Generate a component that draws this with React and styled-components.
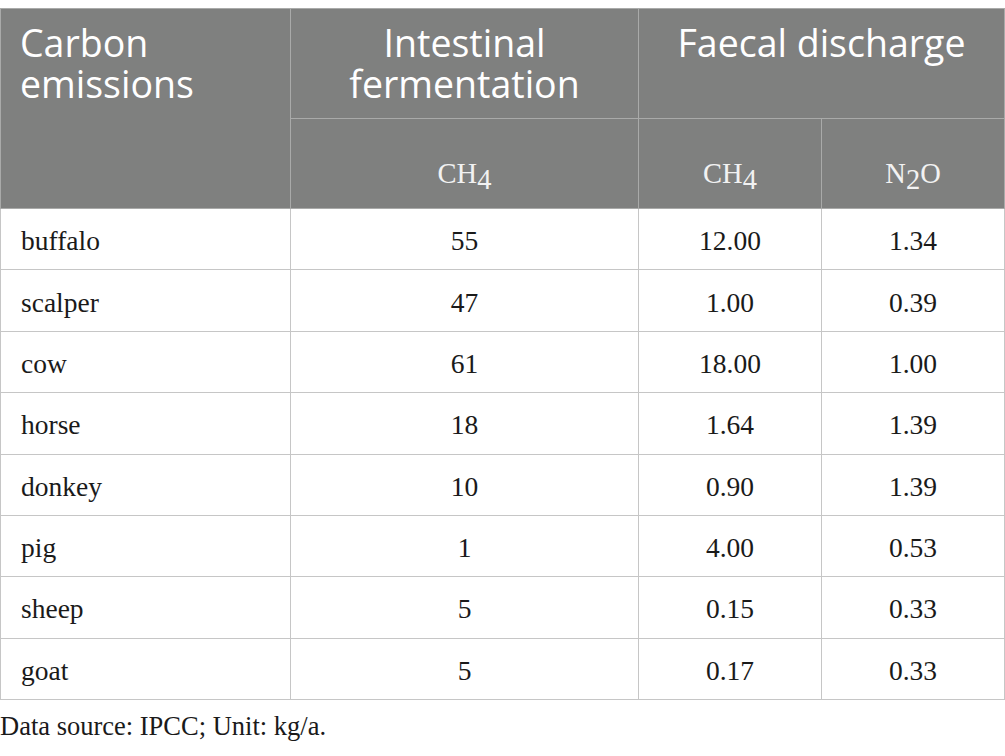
import React from "react";
import styled, { createGlobalStyle } from "styled-components";

const Global = createGlobalStyle`
  html, body { margin: 0; padding: 0; background: #ffffff; }
  body { font-family: "Liberation Serif", "Times New Roman", serif; }
`;

const Page = styled.div`
  padding-top: 8px;
  width: 1005px;
`;

const Table = styled.table`
  width: 1005px;
  table-layout: fixed;
  border-collapse: collapse;
  border: 1px solid #bdbdbd;
`;

const HeadRow = styled.tr`
  height: ${(p) => p.$h}px;
`;

const HeadCell = styled.th`
  background: #7f807f;
  color: #ffffff;
  font-family: "Open Sans", "Liberation Sans", sans-serif;
  font-weight: 400;
  font-size: 37.5px;
  line-height: 41px;
  border: 1px solid #a9aaa9;
  padding: ${(p) => (p.$align === "left" ? "13px 12px 0 19px" : "13px 12px 0 12px")};
  vertical-align: top;
  text-align: ${(p) => p.$align || "center"};
`;

const SubHeadCell = styled.th`
  background: #7f807f;
  color: #f2f2f2;
  font-family: "Liberation Serif", "Times New Roman", serif;
  font-weight: 400;
  font-size: 28.5px;
  line-height: 30px;
  border: 1px solid #a9aaa9;
  padding: 20px 8px 0;
  vertical-align: middle;
  text-align: center;
`;

const Sub = styled.sub`
  font-size: 1em;
  vertical-align: -0.2em;
  line-height: 0;
`;

const BodyRow = styled.tr`
  height: 61.375px;
`;

const Cell = styled.td`
  font-family: "Liberation Serif", "Times New Roman", serif;
  font-size: 27.5px;
  line-height: 30px;
  color: #1a1a1a;
  border: 1px solid #c6c6c6;
  padding: 4px 8px 0 ${(p) => (p.$first ? "20px" : "8px")};
  text-align: ${(p) => (p.$first ? "left" : "center")};
  vertical-align: middle;
  white-space: nowrap;
`;

const Note = styled.p`
  margin: 11px 0 0;
  font-family: "Liberation Serif", "Times New Roman", serif;
  font-size: 26.5px;
  line-height: 30px;
  color: #1a1a1a;
`;

const rows = [
  ["buffalo", "55", "12.00", "1.34"],
  ["scalper", "47", "1.00", "0.39"],
  ["cow", "61", "18.00", "1.00"],
  ["horse", "18", "1.64", "1.39"],
  ["donkey", "10", "0.90", "1.39"],
  ["pig", "1", "4.00", "0.53"],
  ["sheep", "5", "0.15", "0.33"],
  ["goat", "5", "0.17", "0.33"],
];

export default function App() {
  return (
    <Page>
      <Global />
      <Table>
        <colgroup>
          <col style={{ width: 290 }} />
          <col style={{ width: 348 }} />
          <col style={{ width: 183 }} />
          <col style={{ width: 183 }} />
        </colgroup>
        <thead>
          <HeadRow $h={110}>
            <HeadCell rowSpan={2} $align="left">
              Carbon
              <br />
              emissions
            </HeadCell>
            <HeadCell>
              Intestinal
              <br />
              fermentation
            </HeadCell>
            <HeadCell colSpan={2}>Faecal discharge</HeadCell>
          </HeadRow>
          <HeadRow $h={90}>
            <SubHeadCell>
              CH<Sub>4</Sub>
            </SubHeadCell>
            <SubHeadCell>
              CH<Sub>4</Sub>
            </SubHeadCell>
            <SubHeadCell>
              N<Sub>2</Sub>O
            </SubHeadCell>
          </HeadRow>
        </thead>
        <tbody>
          {rows.map((r) => (
            <BodyRow key={r[0]}>
              <Cell $first>{r[0]}</Cell>
              <Cell>{r[1]}</Cell>
              <Cell>{r[2]}</Cell>
              <Cell>{r[3]}</Cell>
            </BodyRow>
          ))}
        </tbody>
      </Table>
      <Note>Data source: IPCC; Unit: kg/a.</Note>
    </Page>
  );
}
